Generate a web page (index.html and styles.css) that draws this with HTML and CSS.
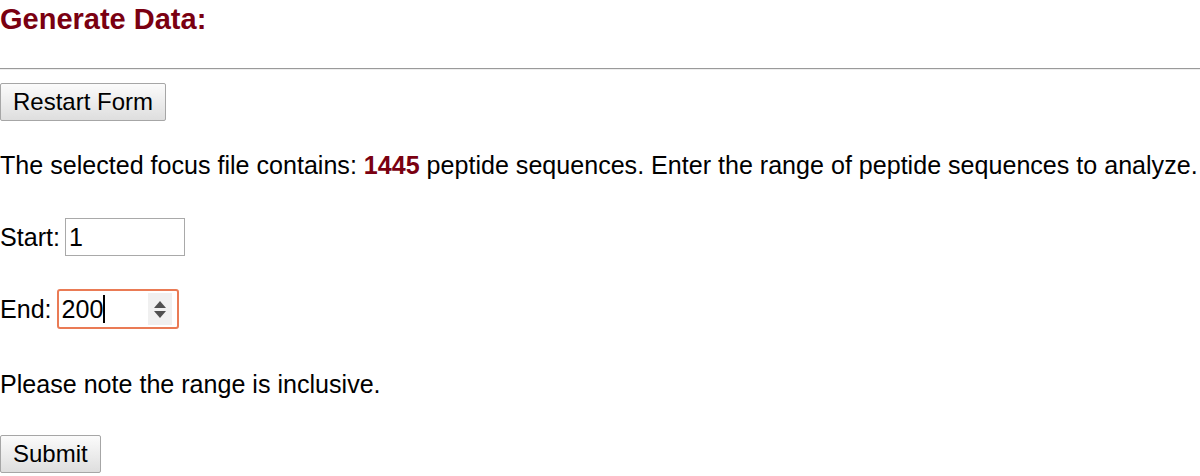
FILE: index.html
```html
<!DOCTYPE html>
<html>
<head>
<meta charset="utf-8">
<title>Generate Data</title>
<link rel="stylesheet" href="styles.css">
</head>
<body>
<h3 class="title">Generate Data:</h3>
<hr class="rule">
<form class="form">
  <button type="button" class="btn btn-restart">Restart Form</button>
  <p class="line intro">The selected focus file contains: <b class="count">1445</b> peptide sequences. Enter the range of peptide sequences to analyze.</p>
  <p class="line field field-start">Start: <input class="text-in" type="text" value="1"></p>
  <p class="line field">End: <span class="num-field"><span class="num-val">200</span><span class="caret"></span><span class="spin"><svg width="14" height="20" viewBox="0 0 14 20"><path d="M7 2 L13 9 L1 9 Z" fill="#505050"/><path d="M1 12 L13 12 L7 19 Z" fill="#505050"/></svg></span></span></p>
  <p class="line note">Please note the range is inclusive.</p>
  <button type="button" class="btn btn-submit">Submit</button>
</form>
</body>
</html>
```
FILE: styles.css
```css
html, body {
  margin: 0;
  padding: 0;
  background: #fff;
}
body {
  font-family: "Liberation Sans", Arial, sans-serif;
  font-size: 25.08px;
  color: #000;
}
.title {
  margin: 0;
  padding-top: 2px;
  font-size: 29px;
  font-weight: bold;
  color: #7a0011;
  line-height: 34px;
}
.rule {
  margin: 32px 0 0 0;
  border: 0;
  border-top: 1px solid #9a9a9a;
  border-bottom: 1px solid #eeeeee;
  height: 0;
}
.form {
  margin: 0;
  padding-top: 13px;
}
.btn {
  font-family: "Liberation Sans", Arial, sans-serif;
  font-size: 24px;
  color: #000;
  height: 38px;
  padding: 0 12px;
  background: linear-gradient(#fbfbfb, #dedede);
  border: 1px solid #a6a6a6;
  border-radius: 2px;
  display: block;
}
.btn-submit {
  margin-top: 36px;
}
.line {
  margin: 0;
  line-height: 29px;
}
.intro {
  margin-top: 30px;
}
.count {
  color: #7a0011;
}
.field {
  margin-top: 34px;
  display: flex;
  align-items: center;
  gap: 5px;
  height: 38px;
}
.field-start {
  margin-top: 38px;
}
.text-in {
  font-family: "Liberation Sans", Arial, sans-serif;
  font-size: 25px;
  width: 120px;
  height: 38px;
  box-sizing: border-box;
  border: 1px solid #a9a9a9;
  padding: 0 3px;
  margin: 0;
  color: #000;
}
.num-field {
  display: inline-flex;
  align-items: center;
  box-sizing: border-box;
  width: 122px;
  height: 40px;
  border: 2px solid #ea7b55;
  border-radius: 3px;
  padding: 0 5px 0 3px;
}
.num-val {
  line-height: 29px;
}
.caret {
  width: 2px;
  height: 28px;
  background: #000;
}
.spin {
  margin-left: auto;
  width: 24px;
  height: 32px;
  background: #f0f0f0;
  display: flex;
  align-items: center;
  justify-content: center;
}
.note {
  margin-top: 42px;
}
```
